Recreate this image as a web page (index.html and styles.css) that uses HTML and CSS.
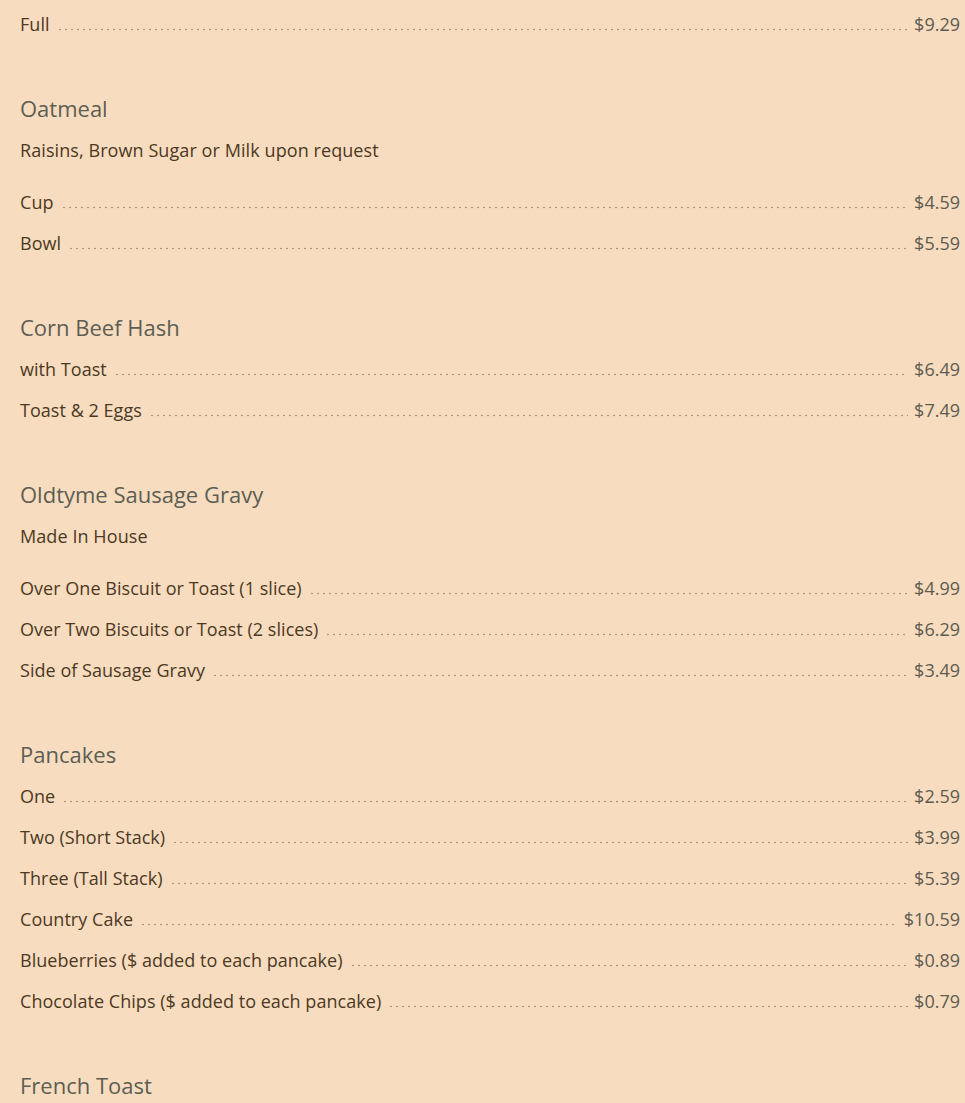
FILE: index.html
```html
<!DOCTYPE html>
<html lang="en">
<head>
<meta charset="utf-8">
<title>Menu</title>
<link rel="stylesheet" href="styles.css">
</head>
<body>
<div class="menu">
  <section class="section">
    <div class="item"><span class="name">Full</span><span class="leader"></span><span class="price">$9.29</span></div>
  </section>

  <section class="section">
    <h2 class="title">Oatmeal</h2>
    <p class="desc">Raisins, Brown Sugar or Milk upon request</p>
    <div class="item"><span class="name">Cup</span><span class="leader"></span><span class="price">$4.59</span></div>
    <div class="item"><span class="name">Bowl</span><span class="leader"></span><span class="price">$5.59</span></div>
  </section>

  <section class="section">
    <h2 class="title">Corn Beef Hash</h2>
    <div class="item"><span class="name">with Toast</span><span class="leader"></span><span class="price">$6.49</span></div>
    <div class="item"><span class="name">Toast &amp; 2 Eggs</span><span class="leader"></span><span class="price">$7.49</span></div>
  </section>

  <section class="section">
    <h2 class="title">Oldtyme Sausage Gravy</h2>
    <p class="desc">Made In House</p>
    <div class="item"><span class="name">Over One Biscuit or Toast (1 slice)</span><span class="leader"></span><span class="price">$4.99</span></div>
    <div class="item"><span class="name">Over Two Biscuits or Toast (2 slices)</span><span class="leader"></span><span class="price">$6.29</span></div>
    <div class="item"><span class="name">Side of Sausage Gravy</span><span class="leader"></span><span class="price">$3.49</span></div>
  </section>

  <section class="section">
    <h2 class="title">Pancakes</h2>
    <div class="item"><span class="name">One</span><span class="leader"></span><span class="price">$2.59</span></div>
    <div class="item"><span class="name">Two (Short Stack)</span><span class="leader"></span><span class="price">$3.99</span></div>
    <div class="item"><span class="name">Three (Tall Stack)</span><span class="leader"></span><span class="price">$5.39</span></div>
    <div class="item"><span class="name">Country Cake</span><span class="leader"></span><span class="price">$10.59</span></div>
    <div class="item"><span class="name">Blueberries ($ added to each pancake)</span><span class="leader"></span><span class="price">$0.89</span></div>
    <div class="item"><span class="name">Chocolate Chips ($ added to each pancake)</span><span class="leader"></span><span class="price">$0.79</span></div>
  </section>

  <section class="section">
    <h2 class="title">French Toast</h2>
  </section>
</div>
</body>
</html>
```

FILE: styles.css
```css
html, body {
  margin: 0;
  padding: 0;
  background: #f8dcbf;
}

body {
  font-family: "Open Sans", "DejaVu Sans", sans-serif;
  font-size: 18px;
  color: #4b3923;
}

.menu {
  padding: 4px 5px 0 20px;
}

.section {
  margin-bottom: 44px;
}

.title {
  margin: -1px 0 1px;
  font-size: 22px;
  font-weight: 400;
  line-height: 41px;
  color: #5c5e53;
}

.desc {
  margin: 0 0 11px;
  line-height: 41px;
  letter-spacing: 0.08px;
}

.item {
  display: flex;
  align-items: baseline;
  line-height: 41px;
}

.name {
  white-space: nowrap;
  letter-spacing: 0.04px;
}

.leader {
  flex: 1;
  height: 3px;
  margin: 0 6px 0 7px;
  background-image: radial-gradient(circle, #ad967e 0.85px, transparent 1.15px);
  background-size: 6px 3px;
  background-repeat: repeat-x;
  background-position: left bottom;
}

.price {
  white-space: nowrap;
  color: #5d5b50;
}
```
